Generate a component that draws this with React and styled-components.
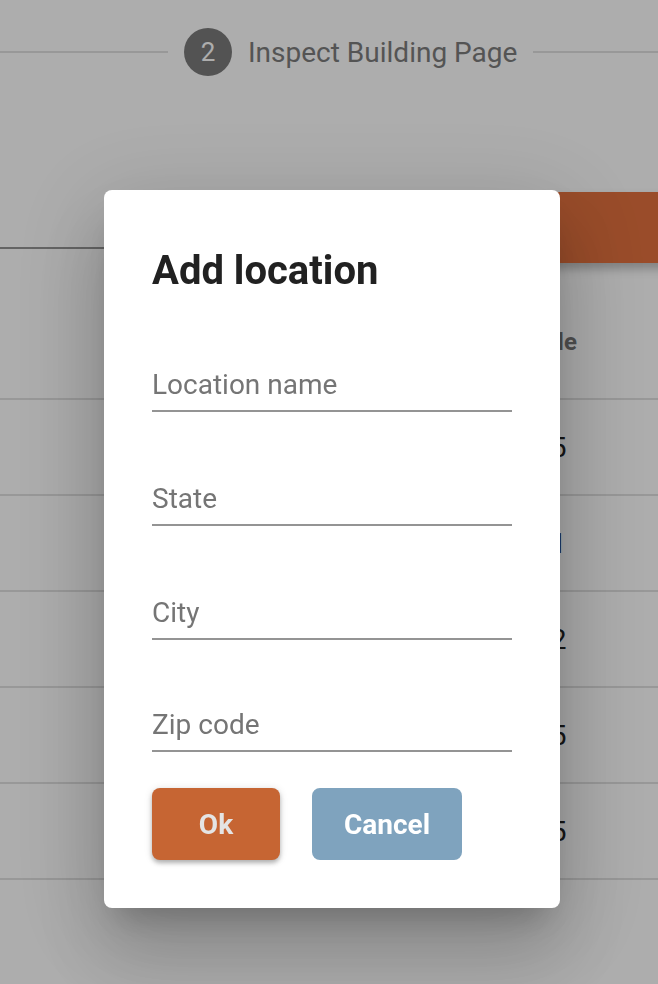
import React from 'react'
import styled, { createGlobalStyle } from 'styled-components'

const GlobalStyle = createGlobalStyle`
  html, body {
    margin: 0;
    padding: 0;
    height: 100%;
    overflow: hidden;
    background: #ffffff;
    font-family: Roboto, "Noto Sans", "Liberation Sans", sans-serif;
  }
  * { box-sizing: border-box; }
`

const Page = styled.div`
  width: 658px;
  height: 984px;
  overflow: hidden;
  background: #ffffff;
`

const Stepper = styled.div`
  display: flex;
  align-items: center;
  gap: 16px;
  height: 104px;
`

const StepLine = styled.div`
  height: 2px;
  background: #e0e0e0;
  flex: ${p => (p.$width ? `0 0 ${p.$width}px` : '1')};
`

const StepCircle = styled.div`
  width: 48px;
  height: 48px;
  border-radius: 50%;
  background: #7b7b7b;
  color: #ffffff;
  display: flex;
  align-items: center;
  justify-content: center;
  font-size: 26px;
`

const StepLabel = styled.span`
  font-size: 28px;
  color: #7d7d7d;
  white-space: nowrap;
`

const Toolbar = styled.div`
  display: flex;
  align-items: flex-start;
  margin-top: 88px;
  height: 71px;
`

const SearchField = styled.div`
  flex: 0 0 500px;
  height: 57px;
  border-bottom: 2px solid #949494;
`

const AddButton = styled.div`
  margin-left: 40px;
  flex: 0 0 140px;
  height: 71px;
  border-radius: 8px;
  background: #e3713e;
  box-shadow: 0 6px 10px rgba(0, 0, 0, 0.25);
`

const Table = styled.div`
  margin-top: 22px;
`

const HeadRow = styled.div`
  display: grid;
  grid-template-columns: 530px 128px;
  align-items: center;
  height: 115px;
  border-bottom: 2px solid #e0e0e0;
`

const Row = styled(HeadRow)`
  height: 96px;
`

const HeadCell = styled.div`
  font-size: 24px;
  font-weight: 700;
  color: #757575;
`

const Cell = styled.div`
  font-size: 28px;
  color: #212121;
  padding-left: 5px;
`

const Backdrop = styled.div`
  position: fixed;
  inset: 0;
  background: rgba(0, 0, 0, 0.32);
  display: flex;
  align-items: flex-start;
  padding: 190px 0 0 104px;
`

const Dialog = styled.div`
  width: 456px;
  background: #ffffff;
  border-radius: 8px;
  padding: 57px 48px 48px;
  box-shadow: 0 22px 30px -14px rgba(0, 0, 0, 0.2),
    0 48px 76px 6px rgba(0, 0, 0, 0.14),
    0 18px 92px 16px rgba(0, 0, 0, 0.12);
`

const Title = styled.h2`
  margin: 0 0 72px;
  font-size: 40px;
  line-height: 48px;
  font-weight: 700;
  color: #212121;
`

const Field = styled.div`
  padding-bottom: 7px;
  border-bottom: 2px solid #949494;
  margin-bottom: ${p => p.$gap}px;
`

const FieldLabel = styled.div`
  font-size: 28px;
  line-height: 36px;
  color: #757575;
`

const Actions = styled.div`
  display: flex;
  gap: 32px;
`

const Button = styled.button`
  height: 72px;
  min-width: 128px;
  padding: 0 32px;
  border: 0;
  border-radius: 8px;
  font-family: inherit;
  font-size: 28px;
  font-weight: 700;
  background: ${p => (p.$primary ? '#c66533' : '#7fa3be')};
  color: ${p => (p.$primary ? '#e4e4e4' : '#ffffff')};
  box-shadow: ${p => (p.$primary ? '0 3px 4px rgba(0,0,0,0.25), 0 1px 8px rgba(0,0,0,0.12)' : 'none')};
`

const rows = ['15', '21', '12', '35', '25']

const fields = [
  { label: 'Location name', gap: 69 },
  { label: 'State', gap: 69 },
  { label: 'City', gap: 67 },
  { label: 'Zip code', gap: 36 },
]

export default function App() {
  return (
    <>
      <GlobalStyle />
      <Page>
        <Stepper>
          <StepLine $width={168} />
          <StepCircle>2</StepCircle>
          <StepLabel>Inspect Building Page</StepLabel>
          <StepLine />
        </Stepper>
        <Toolbar>
          <SearchField />
          <AddButton />
        </Toolbar>
        <Table>
          <HeadRow>
            <span />
            <HeadCell>Sale</HeadCell>
          </HeadRow>
          {rows.map((r, i) => (
            <Row key={i}>
              <span />
              <Cell>{r}</Cell>
            </Row>
          ))}
        </Table>
      </Page>
      <Backdrop>
        <Dialog>
          <Title>Add location</Title>
          {fields.map(f => (
            <Field key={f.label} $gap={f.gap}>
              <FieldLabel>{f.label}</FieldLabel>
            </Field>
          ))}
          <Actions>
            <Button $primary>Ok</Button>
            <Button>Cancel</Button>
          </Actions>
        </Dialog>
      </Backdrop>
    </>
  )
}
